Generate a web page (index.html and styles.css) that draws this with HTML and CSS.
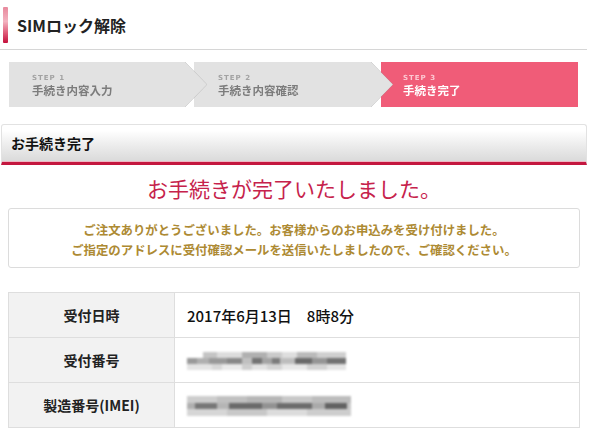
FILE: index.html
```html
<!DOCTYPE html>
<html lang="ja">

<head>
  <meta charset="utf-8">
  <title>SIMロック解除</title>
  <link rel="stylesheet" href="styles.css">
</head>

<body>
  <div class="page-title">
    <span class="page-title-bar"></span>
    <h1>SIMロック解除</h1>
  </div>

  <ol class="steps">
    <li class="step step-1">
      <div class="step-in">
        <span class="step-no">STEP 1</span>
        <span class="step-name">手続き内容入力</span>
      </div>
    </li>
    <li class="step step-2">
      <div class="step-in">
        <span class="step-no">STEP 2</span>
        <span class="step-name">手続き内容確認</span>
      </div>
    </li>
    <li class="step step-3 current">
      <div class="step-in">
        <span class="step-no">STEP 3</span>
        <span class="step-name">手続き完了</span>
      </div>
    </li>
  </ol>

  <div class="section-head">お手続き完了</div>

  <div class="content">
    <h2 class="done">お手続きが完了いたしました。</h2>

    <div class="notice">
      <p>ご注文ありがとうございました。お客様からのお申込みを受け付けました。</p>
      <p>ご指定のアドレスに受付確認メールを送信いたしましたので、ご確認ください。</p>
    </div>

    <table class="info">
      <tr>
        <th>受付日時</th>
        <td>2017年6月13日　8時8分</td>
      </tr>
      <tr>
        <th>受付番号</th>
        <td><span class="blur blur-a"></span></td>
      </tr>
      <tr>
        <th>製造番号(IMEI)</th>
        <td><span class="blur blur-b"></span></td>
      </tr>
    </table>
  </div>
</body>

</html>
```

FILE: styles.css
```css
* {
  box-sizing: border-box;
}

body {
  margin: 0;
  background: #fff;
  font-family: "Noto Sans CJK JP", "Liberation Sans", sans-serif;
  color: #222;
}

/* page title */
.page-title {
  display: flex;
  align-items: center;
  width: 587px;
  height: 50px;
  border-bottom: 1px solid #d6d6d6;
}

.page-title-bar {
  width: 5px;
  height: 36px;
  margin: 0 9px 0 3px;
  border-radius: 1px;
  background: linear-gradient(#e8899d, #f3b3c0 40%, #e0607c 70%, #c4103c);
}

.page-title h1 {
  margin: 0;
  font-size: 16px;
  font-weight: 700;
  color: #222;
}

/* steps */
.steps {
  display: flex;
  list-style: none;
  margin: 12px 0 0 9px;
  padding: 0;
  height: 45px;
}

.step {
  position: relative;
  height: 45px;
  filter: drop-shadow(0 0 0.6px rgba(0, 0, 0, .45));
}

.step-1 {
  width: 198px;
  margin-right: -13px;
  z-index: 3;
}

.step-2 {
  width: 199px;
  margin-right: -12px;
  z-index: 2;
}

.step-3 {
  width: 197px;
  z-index: 1;
}

.step-in {
  display: flex;
  flex-direction: column;
  justify-content: center;
  height: 100%;
  padding: 1px 0 0 23px;
  background: #e2e2e2;
  clip-path: polygon(0 0, calc(100% - 22px) 0, 100% 50%, calc(100% - 22px) 100%, 0 100%);
}

.step-2 .step-in {
  padding-left: 24px;
}

.step-3 .step-in {
  padding-left: 22px;
  background: #f05c78;
  clip-path: none;
}

.step-no {
  font-family: "DejaVu Sans", sans-serif;
  font-size: 7px;
  line-height: 10px;
  letter-spacing: 1px;
  font-weight: 700;
  color: #a2a2a2;
}

.step-name {
  font-size: 11.5px;
  line-height: 15px;
  font-weight: 700;
  color: #7c7c7c;
}

.current .step-no {
  color: #fcc8d2;
}

.current .step-name {
  color: #fff;
}

/* section */
.section-head {
  display: flex;
  align-items: center;
  width: 586px;
  height: 41px;
  margin: 17px 0 0 1px;
  padding: 0 0 2px 9px;
  border: 1px solid #e2e2e2;
  border-bottom: 3px solid #c4173f;
  border-radius: 3px 3px 0 0;
  background: linear-gradient(#fff 15%, #ececec 55%, #d9d9d9);
  box-shadow: inset 0 -1px 0 #efb7c3;
  font-size: 14px;
  font-weight: 700;
  color: #111;
}

.content {
  width: 572px;
  margin-left: 8px;
}

.done {
  margin: 8px 0 0;
  font-size: 21px;
  line-height: 30px;
  font-weight: 400;
  text-align: center;
  color: #c6224b;
}

.notice {
  margin-top: 5px;
  height: 60px;
  padding: 11px 0 7px;
  border: 1px solid #dcdcdc;
  border-radius: 3px;
  text-align: center;
}

.notice p {
  margin: 0;
  font-size: 12.4px;
  line-height: 20px;
  font-weight: 700;
  color: #ad8a33;
}

/* result table */
.info {
  width: 100%;
  margin-top: 24px;
  border-collapse: collapse;
}

.info th,
.info td {
  height: 45px;
  border: 1px solid #dedede;
  padding: 0;
}

.info th {
  width: 166px;
  background: #f2f2f2;
  font-size: 14px;
  font-weight: 700;
  color: #222;
}

.info td {
  padding-left: 12px;
  font-size: 15px;
  font-weight: 500;
  color: #111;
}

.blur {
  display: block;
  filter: blur(0.9px);
}

.blur-a {
  width: 159px;
  height: 18px;
  margin-top: 2px;
  background:
    linear-gradient(90deg, #fff 0 16px, #c4c4c4 16px 30px, #dcdcdc 30px 55px, #b0b0b0 55px 80px, #cacaca 80px 95px, #dedede 95px 110px, #bababa 110px 130px, #cfcfcf 130px 159px) top / 100% 6px no-repeat,
    linear-gradient(90deg, #9a9a9a 0 10px, #b0b0b0 10px 22px, #999 22px 40px, #888 40px 55px, #c0c0c0 55px 65px, #737373 65px 75px, #a4a4a4 75px 85px, #7c7c7c 85px 93px, #bdbdbd 93px 108px, #6a6a6a 108px 125px, #959595 125px 140px, #727272 140px 159px) center / 100% 6px no-repeat,
    linear-gradient(90deg, #e4e4e4 0 25px, #d8d8d8 25px 35px, #eaeaea 35px 55px, #cecece 55px 65px, #e2e2e2 65px 80px, #d4d4d4 80px 95px, #e8e8e8 95px 120px, #d2d2d2 120px 140px, #e4e4e4 140px 159px) bottom / 100% 6px no-repeat;
}

.blur-b {
  width: 164px;
  height: 20px;
  margin-top: 1px;
  background:
    linear-gradient(90deg, #cdcdcd 0 30px, #c0c0c0 30px 60px, #b6b6b6 60px 95px, #c8c8c8 95px 125px, #bcbcbc 125px 164px) top / 100% 7px no-repeat,
    linear-gradient(90deg, #b0b0b0 0 8px, #777 8px 30px, #b5b5b5 30px 42px, #6a6a6a 42px 75px, #929292 75px 90px, #6c6c6c 90px 125px, #aaa 125px 138px, #626262 138px 160px, #c8c8c8 160px 164px) center / 100% 6px no-repeat,
    linear-gradient(90deg, #d6d6d6 0 40px, #c8c8c8 40px 80px, #dcdcdc 80px 120px, #cdcdcd 120px 164px) bottom / 100% 7px no-repeat;
}
```
